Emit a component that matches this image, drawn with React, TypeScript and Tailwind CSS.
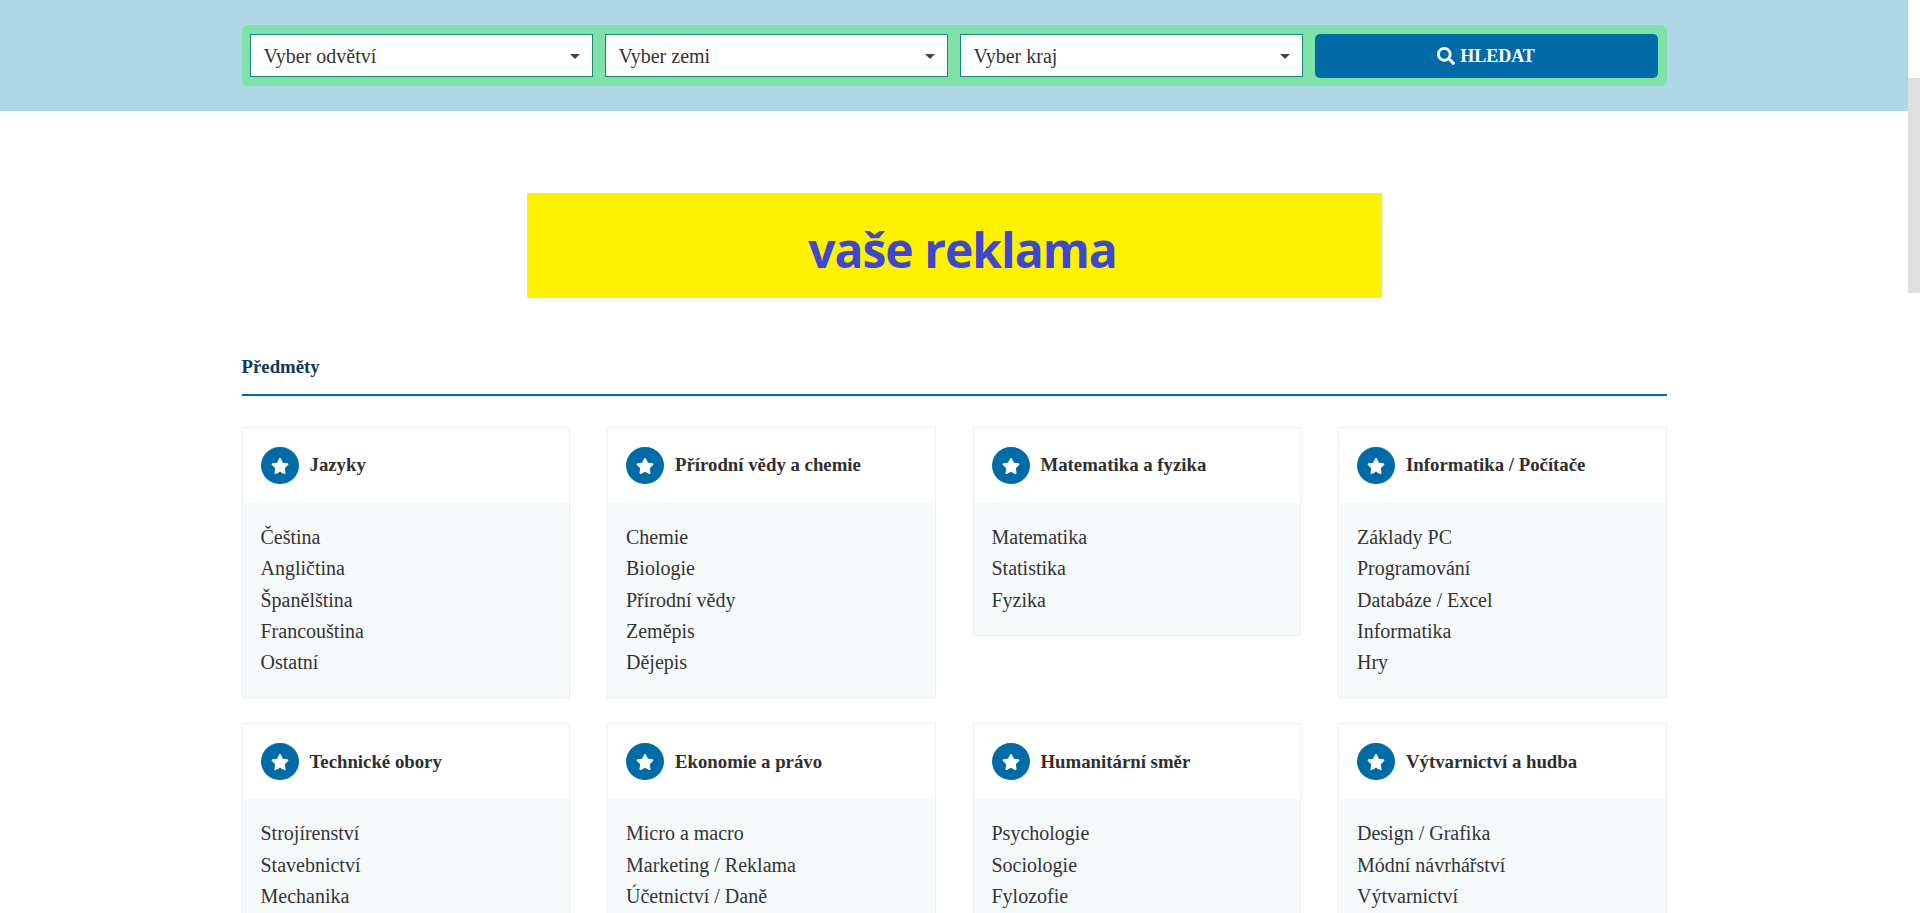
import { FaSearch, FaStar } from "react-icons/fa";

const categories = [
  { title: "Jazyky", items: ["Čeština", "Angličtina", "Španělština", "Francouština", "Ostatní"] },
  { title: "Přírodní vědy a chemie", items: ["Chemie", "Biologie", "Přírodní vědy", "Zeměpis", "Dějepis"] },
  { title: "Matematika a fyzika", items: ["Matematika", "Statistika", "Fyzika"] },
  { title: "Informatika / Počítače", items: ["Základy PC", "Programování", "Databáze / Excel", "Informatika", "Hry"] },
  { title: "Technické obory", items: ["Strojírenství", "Stavebnictví", "Mechanika"] },
  { title: "Ekonomie a právo", items: ["Micro a macro", "Marketing / Reklama", "Účetnictví / Daně"] },
  { title: "Humanitární směr", items: ["Psychologie", "Sociologie", "Fylozofie"] },
  { title: "Výtvarnictví a hudba", items: ["Design / Grafika", "Módní návrhářství", "Výtvarnictví"] },
];

function FakeSelect({ label }: { label: string }) {
  return (
    <div className="flex h-[43px] w-[343px] items-center justify-between border border-[#16877a] bg-white pl-[13px] pr-[12px] text-[20px] text-[#333]">
      <span>{label}</span>
      <span className="mt-[1px] h-0 w-0 border-x-[5px] border-t-[5px] border-x-transparent border-t-[#444]" />
    </div>
  );
}

function CategoryCard({ title, items }: { title: string; items: string[] }) {
  return (
    <div className="border border-[#ebeff1] bg-white">
      <div className="flex h-[75px] items-center gap-[11px] pl-[18px]">
        <div className="flex h-[37px] w-[38px] items-center justify-center rounded-full bg-[#006ba6]">
          <FaStar className="text-[18px] text-white" />
        </div>
        <h3 className="text-[18.8px] font-bold text-[#2f2f2f]">{title}</h3>
      </div>
      <ul className="bg-[#f7fafb] pb-[19px] pl-[18px] pt-[19px] text-[20px] leading-[31.25px] text-[#333]">
        {items.map((item) => (
          <li key={item}>{item}</li>
        ))}
      </ul>
    </div>
  );
}

export default function App() {
  return (
    <div className="flex h-[913px] overflow-hidden bg-white font-['Liberation_Serif',serif]">
      <div className="w-[1908px] shrink-0">
        {/* Search bar */}
        <div className="h-[111px] bg-[#aed8e6] pt-[25px]">
          <div className="mx-auto flex h-[61px] w-[1425px] gap-[12px] rounded-[6px] bg-[#7ee2a8] pl-[8px] pt-[9px]">
            <FakeSelect label="Vyber odvětví" />
            <FakeSelect label="Vyber zemi" />
            <FakeSelect label="Vyber kraj" />
            <button className="flex h-[44px] w-[343px] items-center justify-center gap-[5px] rounded-[5px] bg-[#006ba6] text-[18px] font-bold text-white">
              <FaSearch className="text-[18px]" />
              HLEDAT
            </button>
          </div>
        </div>

        {/* Ad banner */}
        <div className="mx-auto mt-[82px] flex h-[105px] w-[855px] items-center justify-center bg-[#fff200] pl-[17px] pt-[8px] font-['Open_Sans',sans-serif] text-[48px] font-bold tracking-[-1px] text-[#3f48cc]">
          vaše reklama
        </div>

        <div className="mx-auto w-[1425px]">
          <div className="mt-[55px] h-[43px] border-b-2 border-[#006ba6] text-[18.8px] font-bold text-[#0b3a5b]">
            Předměty
          </div>
          <div className="mt-[31px] grid grid-cols-4 items-start gap-x-[37px] gap-y-[25px]">
            {categories.map((cat) => (
              <CategoryCard key={cat.title} title={cat.title} items={cat.items} />
            ))}
          </div>
        </div>
      </div>

      {/* Scrollbar */}
      <div className="w-[12px]">
        <div className="mt-[78px] h-[215px] bg-[#dfdfdf]" />
      </div>
    </div>
  );
}
